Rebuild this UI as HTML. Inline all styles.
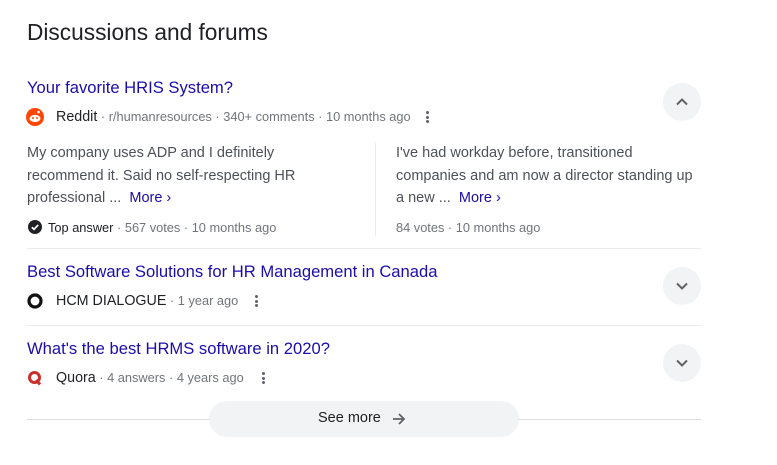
<!DOCTYPE html>
<html><head><style>
body{margin:0;width:777px;height:465px;background:#fff;font-family:"Liberation Sans",Arial,sans-serif;position:relative;overflow:hidden}
.a{position:absolute;white-space:nowrap}
h2{position:absolute;left:27px;top:19px;margin:0;font-weight:400;font-size:22.7px;color:#202124}
.t{color:#1a0dab;font-size:16.6px}
.m{font-size:12.8px;color:#70757a}
.m b{font-weight:400;color:#202124;font-size:14.3px}
.s{font-size:14.5px;color:#4d5156;line-height:22.5px;white-space:normal;width:300px}
.more{color:#1a0dab}
.hr{position:absolute;left:27px;width:674px;height:1px;background:#e8eaed}
.c{position:absolute;width:38px;height:38px;border-radius:50%;background:#f1f3f4}
.d{position:absolute;width:3px}
.d i{display:block;width:3px;height:3px;border-radius:50%;background:#5f6368;margin-bottom:1.5px}
</style></head><body>
<h2>Discussions and forums</h2>

<div class="a t" style="left:27px;top:78px">Your favorite HRIS System?</div>
<svg class="a" style="left:26px;top:108px" width="18" height="18" viewBox="0 0 18 18"><circle cx="9" cy="9" r="9" fill="#ff4500"/><ellipse cx="9" cy="10.5" rx="5.5" ry="3.6" fill="#fff"/><circle cx="12.5" cy="4" r="1.3" fill="#fff"/><circle cx="7" cy="10" r="1" fill="#ff4500"/><circle cx="11" cy="10" r="1" fill="#ff4500"/></svg>
<div class="a m" style="left:56px;top:109px"><b>Reddit</b> · r/humanresources · 340+ comments · 10 months ago</div>
<div class="d" style="left:426px;top:111px"><i></i><i></i><i></i></div>
<div class="c" style="left:663px;top:83px"></div>
<svg class="a" style="left:674px;top:94px" width="16" height="16" viewBox="0 0 16 16"><path d="M3 10.5 L8 5.5 L13 10.5" stroke="#5f6368" stroke-width="2" fill="none"/></svg>

<div class="a s" style="left:27px;top:142px">My company uses ADP and I definitely recommend it. Said no self-respecting HR professional ... &nbsp;<span class="more">More ›</span></div>
<div class="a" style="left:375px;top:143px;width:1px;height:93px;background:#e8eaed"></div>
<div class="a s" style="left:396px;top:142px;width:302px">I've had workday before, transitioned companies and am now a director standing up a new ... &nbsp;<span class="more">More ›</span></div>
<svg class="a" style="left:28px;top:220px" width="14" height="14" viewBox="0 0 14 14"><circle cx="7" cy="7" r="7" fill="#202124"/><path d="M3.8 7.2 L6 9.3 L10.2 4.9" stroke="#fff" stroke-width="1.7" fill="none"/></svg>
<div class="a m" style="left:48px;top:220px"><span style="color:#202124">Top answer</span> · 567 votes · 10 months ago</div>
<div class="a m" style="left:396px;top:220px">84 votes · 10 months ago</div>

<div class="hr" style="top:248px"></div>

<div class="a t" style="left:27px;top:262px">Best Software Solutions for HR Management in Canada</div>
<svg class="a" style="left:27px;top:293px" width="16" height="16" viewBox="0 0 16 16"><circle cx="8" cy="8" r="6" stroke="#111" stroke-width="3.2" fill="none"/></svg>
<div class="a m" style="left:56px;top:293px"><b>HCM DIALOGUE</b> · 1 year ago</div>
<div class="d" style="left:255px;top:295px"><i></i><i></i><i></i></div>
<div class="c" style="left:663px;top:267px"></div>
<svg class="a" style="left:674px;top:278px" width="16" height="16" viewBox="0 0 16 16"><path d="M3 5.5 L8 10.5 L13 5.5" stroke="#5f6368" stroke-width="2" fill="none"/></svg>

<div class="hr" style="top:325px"></div>

<div class="a t" style="left:27px;top:339px">What's the best HRMS software in 2020?</div>
<svg class="a" style="left:27px;top:370px" width="16" height="16" viewBox="0 0 16 16"><circle cx="7.5" cy="7.5" r="5" stroke="#c9302c" stroke-width="3" fill="none"/><path d="M9 10 L13 14.5" stroke="#c9302c" stroke-width="3"/></svg>
<div class="a m" style="left:56px;top:370px"><b>Quora</b> · 4 answers · 4 years ago</div>
<div class="d" style="left:262px;top:372px"><i></i><i></i><i></i></div>
<div class="c" style="left:663px;top:344px"></div>
<svg class="a" style="left:674px;top:355px" width="16" height="16" viewBox="0 0 16 16"><path d="M3 5.5 L8 10.5 L13 5.5" stroke="#5f6368" stroke-width="2" fill="none"/></svg>

<div class="hr" style="top:419px;background:#dadce0"></div>
<div class="a" style="left:209px;top:401px;width:310px;height:36px;border-radius:18px;background:#f1f3f4"></div>
<div class="a" style="left:318px;top:410px;font-size:14.5px;color:#202124">See more</div>
<svg class="a" style="left:390px;top:410px" width="18" height="18" viewBox="0 0 18 18"><path d="M3 9 H14 M9 4 L14 9 L9 14" stroke="#5f6368" stroke-width="1.8" fill="none"/></svg>
</body></html>
